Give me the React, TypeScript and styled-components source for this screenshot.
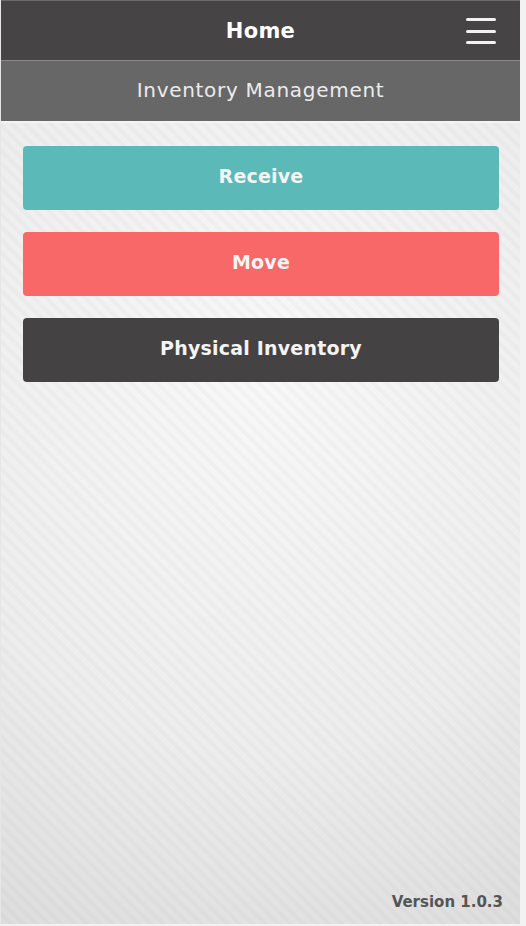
import styled, { createGlobalStyle } from "styled-components"

const GlobalStyle = createGlobalStyle`
  html, body {
    margin: 0;
    padding: 0;
    background: #f2f2f2;
  }
  body {
    font-family: "DejaVu Sans", "Liberation Sans", sans-serif;
  }
`

const Screen = styled.div`
  width: 520px;
  height: 924px;
  display: flex;
  flex-direction: column;
  border-left: 1px solid #e6e6e6;
  box-sizing: border-box;
  background:
    repeating-linear-gradient(
      45deg,
      rgba(0, 0, 0, 0) 0px,
      rgba(0, 0, 0, 0) 5px,
      rgba(0, 0, 0, 0.02) 5px,
      rgba(0, 0, 0, 0.02) 9px
    ),
    radial-gradient(ellipse 120% 75% at 50% 40%, #f8f8f8 0%, #ededed 55%, #d8d8d8 100%);
`

const TopBar = styled.header`
  height: 60px;
  background: #464445;
  border-top: 1px solid #6a6a6a;
  box-sizing: border-box;
  display: flex;
  align-items: center;
  justify-content: center;
  position: relative;
  color: #fff;
  font-weight: bold;
  font-size: 21px;
  letter-spacing: 0.3px;
`

const MenuButton = styled.button`
  position: absolute;
  right: 24px;
  top: 17px;
  width: 30px;
  height: 26px;
  padding: 0;
  border: none;
  background: none;
  display: flex;
  flex-direction: column;
  justify-content: space-between;
  cursor: pointer;
`

const MenuLine = styled.span`
  display: block;
  height: 3px;
  border-radius: 2px;
  background: #f2f2f2;
`

const SubBar = styled.div`
  height: 63px;
  background: #676767;
  border-top: 1px solid #8a8a8a;
  border-bottom: 2px solid #f4f4f4;
  box-sizing: border-box;
  display: flex;
  align-items: center;
  justify-content: center;
  color: #ececec;
  font-size: 20px;
  letter-spacing: 0.7px;
  padding-bottom: 2px;
`

const Content = styled.main`
  flex: 1;
  display: flex;
  flex-direction: column;
  gap: 22px;
  padding: 23px 21px 0 22px;
`

const ActionButton = styled.button<{ bg: string }>`
  height: 64px;
  border: none;
  border-radius: 4px;
  background: ${(props) => props.bg};
  color: #f4f4f4;
  font-family: "DejaVu Sans", "Liberation Sans", sans-serif;
  font-weight: bold;
  font-size: 19px;
  letter-spacing: 0.2px;
  padding: 0 0 4px;
  cursor: pointer;
`

const Footer = styled.div`
  display: flex;
  justify-content: flex-end;
  padding: 0 17px 13px 0;
  color: #555;
  font-weight: bold;
  font-size: 15px;
`

export default function App() {
  return (
    <>
      <GlobalStyle />
      <Screen>
        <TopBar>
          Home
          <MenuButton aria-label="menu">
            <MenuLine />
            <MenuLine />
            <MenuLine />
          </MenuButton>
        </TopBar>
        <SubBar>Inventory Management</SubBar>
        <Content>
          <ActionButton bg="#5bb9b8">Receive</ActionButton>
          <ActionButton bg="#f96868">Move</ActionButton>
          <ActionButton bg="#444243">Physical Inventory</ActionButton>
        </Content>
        <Footer>Version 1.0.3</Footer>
      </Screen>
    </>
  )
}
